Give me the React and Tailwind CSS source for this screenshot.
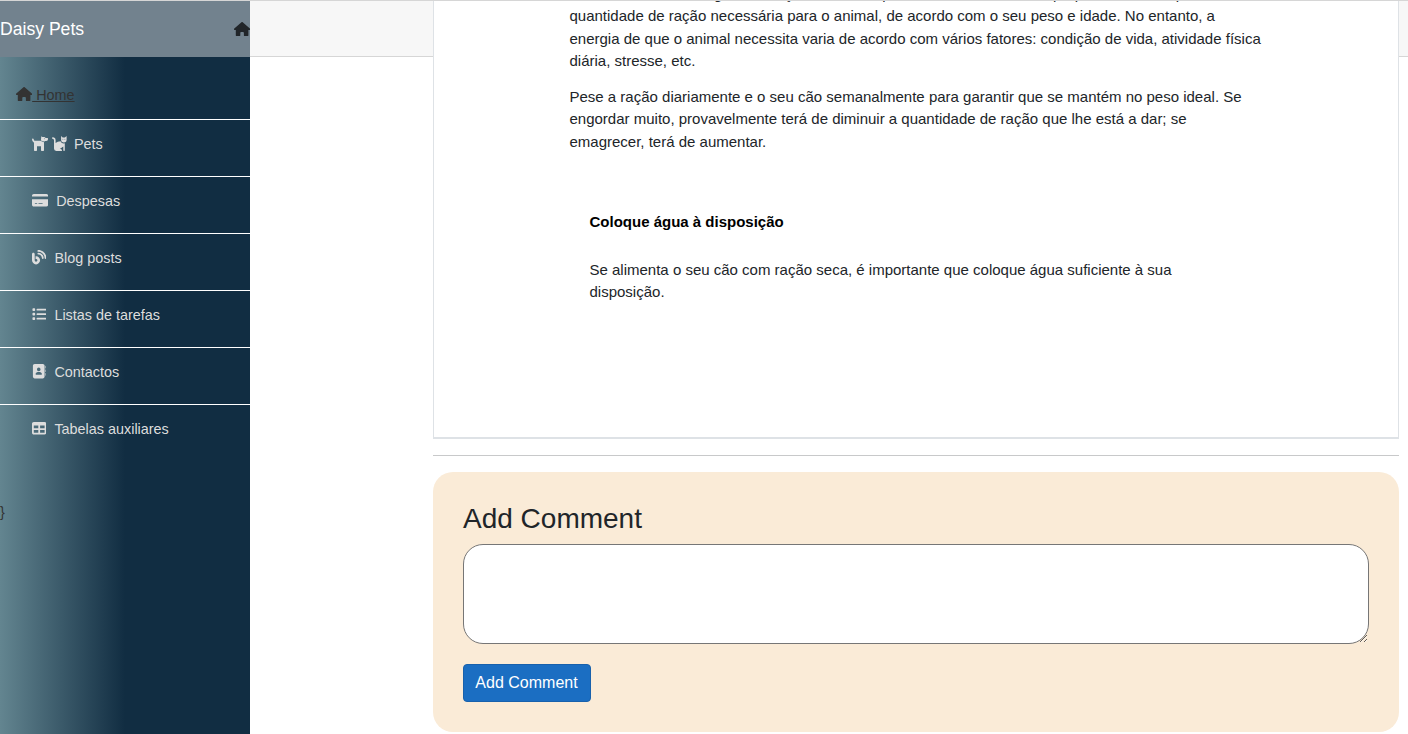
import React from "react";
import { FaHouse, FaCreditCard, FaBlog, FaList, FaAddressBook, FaTable } from "react-icons/fa6";

const WIDE = "h-[14.4px] w-[16.2px]";
const SQUARE = "h-[14.4px] w-[14.4px]";

function Dog() {
  return (
    <svg viewBox="0 0 16 15" className="h-[15px] w-4" fill="currentColor">
      <path d="M9.3 0.2 L10.4 1 H12.3 Q12.9 1 13.3 1.6 L13.5 2 H15.5 Q16 2 16 2.5 V3.2 Q16 5 14.2 5 H12.6 V5.8 L8.9 4.4 Z" />
      <path d="M0 3.3 Q0 2.4 0.8 2.4 Q1.6 2.4 1.7 3.3 Q1.8 4.8 3 4.8 H8.3 L12 6.3 V14.3 Q12 15 11.3 15 H9.7 Q9 15 9 14.3 V10.3 H5 V14.3 Q5 15 4.3 15 H2.7 Q2 15 2 14.3 V6.7 Q0 6 0 3.3 Z" />
      <circle cx="12.4" cy="2.8" r="0.45" className="fill-[#4d6879]" />
    </svg>
  );
}

function Cat() {
  return (
    <svg viewBox="0 0 15 15" className="h-[15px] w-[15px]" fill="currentColor">
      <path d="M9.1 0 L10.7 1.6 H12.9 L14.6 0 V3.8 Q14.6 6.5 11.9 6.5 Q9.1 6.5 9.1 3.8 Z" />
      <path d="M0.8 1.2 Q3.4 1.2 3.6 4 V7 Q5.5 5.2 8.5 5.2 Q9.5 7.4 11.9 7.4 L12.8 7.2 V14.3 Q12.8 15 12.1 15 Q11.3 15 11.3 14.3 V10.4 L7.8 13.1 H8.7 Q10 13.2 10 14.4 Q10 15 9.5 15 H4.3 Q2 15 2 12.6 V4.2 Q2 2.9 0.8 2.9 Q0 2.8 0 2 Q0 1.2 0.8 1.2 Z" />
      <g className="fill-[#465f71]">
        <circle cx="10.9" cy="3.3" r="0.45" />
        <circle cx="12.9" cy="3.3" r="0.45" />
      </g>
    </svg>
  );
}

const items = [
  { label: "Pets", icons: [[Dog, ""], [Cat, ""]], gap: "ml-[7px]" },
  { label: "Despesas", icons: [[FaCreditCard, WIDE]], gap: "ml-2" },
  { label: "Blog posts", icons: [[FaBlog, SQUARE]], gap: "ml-2" },
  { label: "Listas de tarefas", icons: [[FaList, SQUARE]], gap: "ml-2" },
  { label: "Contactos", icons: [[FaAddressBook, SQUARE]], gap: "ml-2" },
  { label: "Tabelas auxiliares", icons: [[FaTable, SQUARE]], gap: "ml-2" },
];

function Sidebar() {
  return (
    <aside className="w-[250px] shrink-0 flex flex-col bg-[linear-gradient(to_right,#638590_0%,#112d42_50%)] text-[14.4px]">
      <div className="h-14 bg-[#72828e] flex items-center justify-between">
        <span className="text-white text-[17.6px] leading-6">Daisy Pets</span>
        <FaHouse className="h-[14.4px] w-[16.2px] text-[#212529]" />
      </div>
      <a className="h-[63px] border-b border-white flex items-center pl-4 pt-[14px] text-[#333] underline">
        <FaHouse className="h-[14.4px] w-[16.2px] mb-[1.5px]" />
        <span className="whitespace-pre"> Home</span>
      </a>
      {items.map((it, i) => (
        <div
          key={it.label}
          className={"h-[57px] flex items-start pl-8 pt-[13px] text-[#ddd] " + (i < items.length - 1 ? "border-b border-white" : "")}
        >
          <div className="flex h-[21px] items-center gap-1">
            {it.icons.map(([Icon, size], k) => (
              <Icon key={k} className={size} />
            ))}
          </div>
          <span className={"leading-[22px] " + it.gap}>{it.label}</span>
        </div>
      ))}
      <div className="mt-[39px] leading-[22px] text-[#333]">{"}"}</div>
    </aside>
  );
}

export default function App() {
  return (
    <div className="h-[734px] w-[1408px] overflow-hidden bg-white border-t border-[#d6d6d6] flex font-['Liberation_Sans',Arial,sans-serif] text-[15px] leading-[22.5px] text-[#212529]">
      <Sidebar />
      <div className="flex-1 bg-[linear-gradient(#f7f7f7_55px,#d6d6d6_55px,#d6d6d6_56px,#fff_56px)] pl-[183px] pr-[9px]">
        <article className="h-[438px] overflow-hidden bg-white border-x border-b-2 border-[#dee2e6]">
          <div className="ml-[135.5px] w-[700px] -mt-[18.5px]">
            <p className="whitespace-pre-line">
              {"A maioria das embalagens de ração contém especificada uma medida e proposta indicada para a\nquantidade de ração necessária para o animal, de acordo com o seu peso e idade. No entanto, a\nenergia de que o animal necessita varia de acordo com vários fatores: condição de vida, atividade física\ndiária, stresse, etc."}
            </p>
            <p className="mt-[13px] whitespace-pre-line">
              {"Pese a ração diariamente e o seu cão semanalmente para garantir que se mantém no peso ideal. Se\nengordar muito, provavelmente terá de diminuir a quantidade de ração que lhe está a dar; se\nemagrecer, terá de aumentar."}
            </p>
            <div className="ml-5 mt-[58px]">
              <h4 className="font-bold text-black">Coloque água à disposição</h4>
              <p className="mt-[25.5px] leading-[22px] whitespace-pre-line">
                {"Se alimenta o seu cão com ração seca, é importante que coloque água suficiente à sua\ndisposição."}
              </p>
            </div>
          </div>
        </article>
        <hr className="mt-4 border-t border-[#c8c9ca]" />
        <section className="mt-4 h-[260px] rounded-[20px] bg-[#faebd7] p-[30px]">
          <h3 className="text-[28px] leading-[33.6px]">Add Comment</h3>
          <textarea className="mt-2 block h-[100px] w-full rounded-[20px] border border-[#767676] bg-white resize" />
          <button className="mt-5 h-[38px] w-32 rounded-[4px] border border-[#1861ac] bg-[#1b6ec2] pr-px text-base leading-6 text-white">Add Comment</button>
        </section>
      </div>
    </div>
  );
}
